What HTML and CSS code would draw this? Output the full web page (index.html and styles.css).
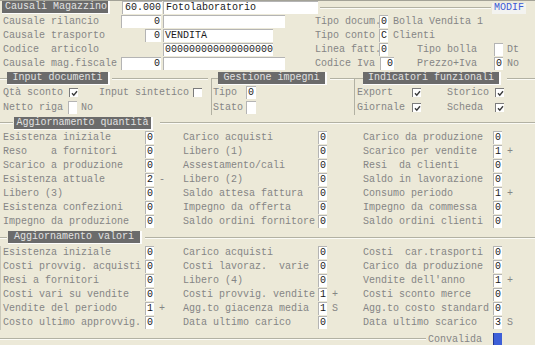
FILE: index.html
```html
<!DOCTYPE html>
<html lang="it">
  <head>
    <meta charset="UTF-8" />
    <meta name="viewport" content="width=device-width, initial-scale=1.0" />
    <title>Causali Magazzino</title>
    <link rel="stylesheet" href="styles.css">
  </head>
  <body>
    <div class="top">
      <div class="r1">
        <span class="tit t-caus">Causali Magazzino</span>
        <span class="fld f-cod">60.000</span>
        <span class="fld f-des1">Fotolaboratorio</span>
        <span class="seg"></span>
        <span class="modif">MODIF</span>
      </div>
      <div class="row">
        <span class="lbl">Causale rilancio</span>
        <span class="fld f-num">0</span>
        <span class="fld f-des2"></span>
        <span class="lbl">Tipo docum.</span>
        <span class="fld f-one">0</span>
        <span class="lbl c-txt">Bolla Vendita 1</span>
      </div>
      <div class="row">
        <span class="lbl">Causale trasporto</span>
        <span class="fld f-num f-sm">0</span>
        <span class="fld f-des3">VENDITA</span>
        <span class="lbl">Tipo conto</span>
        <span class="fld f-one">C</span>
        <span class="lbl c-txt">Clienti</span>
      </div>
      <div class="row">
        <span class="lbl">Codice  articolo</span>
        <span></span>
        <span class="fld f-des3">000000000000000000</span>
        <span class="lbl">Linea fatt.</span>
        <span class="fld f-one">0</span>
        <span></span>
        <span class="lbl">Tipo bolla</span>
        <span class="fld f-one"></span>
        <span class="lbl c-end">Dt</span>
      </div>
      <div class="row">
        <span class="lbl">Causale mag.fiscale</span>
        <span class="fld f-num">0</span>
        <span class="fld f-des2"></span>
        <span class="lbl">Codice Iva</span>
        <span class="fld f-iva">0</span>
        <span></span>
        <span class="lbl">Prezzo+Iva</span>
        <span class="fld f-one">0</span>
        <span class="lbl c-end">No</span>
      </div>
    </div>

    <div class="grps">
      <div class="grp">
        <div class="gt">
          <span class="seg s-7"></span>
          <span class="tit t-inp">Input documenti</span>
          <span class="seg s-r"></span>
        </div>
        <div class="gb gb1">
          <span class="lbl">Qtà sconto</span>
          <span class="chk"><svg width="7" height="7" viewBox="0 0 7 7"><path d="M1 3.2 L2.8 5.2 L6 1.2" fill="none" stroke="#3c3c3c" stroke-width="1.4"/></svg></span>
          <span class="lbl">Input sintetico</span>
          <span class="chk"></span>
          <span class="lbl">Netto riga</span>
          <span class="pair"><span class="fld f-one"></span><span class="lbl">No</span></span>
        </div>
      </div>
      <div class="grp">
        <div class="gt">
          <span class="seg corner"></span>
          <span class="tit t-ges">Gestione impegni</span>
          <span class="seg s-r3"></span>
        </div>
        <div class="gb gb2">
          <span class="lbl">Tipo</span>
          <span class="fld f-one f-10">0</span>
          <span class="lbl">Stato</span>
          <span class="fld f-one f-10"></span>
        </div>
      </div>
      <div class="grp">
        <div class="gt">
          <span class="seg corner c-8"></span>
          <span class="tit t-ind">Indicatori funzionali</span>
          <span class="seg s-r6"></span>
        </div>
        <div class="gb gb3">
          <span class="lbl">Export</span>
          <span class="chk"><svg width="7" height="7" viewBox="0 0 7 7"><path d="M1 3.2 L2.8 5.2 L6 1.2" fill="none" stroke="#3c3c3c" stroke-width="1.4"/></svg></span>
          <span class="lbl">Storico</span>
          <span class="chk"><svg width="7" height="7" viewBox="0 0 7 7"><path d="M1 3.2 L2.8 5.2 L6 1.2" fill="none" stroke="#3c3c3c" stroke-width="1.4"/></svg></span>
          <span class="lbl">Giornale</span>
          <span class="chk"><svg width="7" height="7" viewBox="0 0 7 7"><path d="M1 3.2 L2.8 5.2 L6 1.2" fill="none" stroke="#3c3c3c" stroke-width="1.4"/></svg></span>
          <span class="lbl">Scheda</span>
          <span class="chk"><svg width="7" height="7" viewBox="0 0 7 7"><path d="M1 3.2 L2.8 5.2 L6 1.2" fill="none" stroke="#3c3c3c" stroke-width="1.4"/></svg></span>
        </div>
      </div>
    </div>

    <div class="sec">
      <div class="gt gt-q">
        <span class="seg s-13"></span>
        <span class="tit t-qta">Aggiornamento quantità</span>
        <span class="seg s-l7"></span>
      </div>
      <div class="vals">
        <span class="lbl">Esistenza iniziale</span><span class="fld v">0</span><span class="sfx"></span>
        <span class="lbl">Carico acquisti</span><span class="fld v">0</span><span class="sfx"></span>
        <span class="lbl">Carico da produzione</span><span class="fld v">0</span><span class="sfx"></span>

        <span class="lbl">Reso    a fornitori</span><span class="fld v">0</span><span class="sfx"></span>
        <span class="lbl">Libero (1)</span><span class="fld v">0</span><span class="sfx"></span>
        <span class="lbl">Scarico per vendite</span><span class="fld v">1</span><span class="sfx">+</span>

        <span class="lbl">Scarico a produzione</span><span class="fld v">0</span><span class="sfx"></span>
        <span class="lbl">Assestamento/cali</span><span class="fld v">0</span><span class="sfx"></span>
        <span class="lbl">Resi  da clienti</span><span class="fld v">0</span><span class="sfx"></span>

        <span class="lbl">Esistenza attuale</span><span class="fld v">2</span><span class="sfx">-</span>
        <span class="lbl">Libero (2)</span><span class="fld v">0</span><span class="sfx"></span>
        <span class="lbl">Saldo in lavorazione</span><span class="fld v">0</span><span class="sfx"></span>

        <span class="lbl">Libero (3)</span><span class="fld v">0</span><span class="sfx"></span>
        <span class="lbl">Saldo attesa fattura</span><span class="fld v">0</span><span class="sfx"></span>
        <span class="lbl">Consumo periodo</span><span class="fld v">1</span><span class="sfx">+</span>

        <span class="lbl">Esistenza confezioni</span><span class="fld v">0</span><span class="sfx"></span>
        <span class="lbl">Impegno da offerta</span><span class="fld v">0</span><span class="sfx"></span>
        <span class="lbl">Impegno da commessa</span><span class="fld v">0</span><span class="sfx"></span>

        <span class="lbl">Impegno da produzione</span><span class="fld v">0</span><span class="sfx"></span>
        <span class="lbl">Saldo ordini fornitore</span><span class="fld v">0</span><span class="sfx"></span>
        <span class="lbl">Saldo ordini clienti</span><span class="fld v">0</span><span class="sfx"></span>
      </div>
    </div>

    <div class="sec">
      <div class="gt gt-v">
        <span class="seg s-7"></span>
        <span class="tit t-val">Aggiornamento valori</span>
        <span class="seg s-l3"></span>
      </div>
      <div class="vals vals-v">
        <span class="lbl">Esistenza iniziale</span><span class="fld v">0</span><span class="sfx"></span>
        <span class="lbl">Carico acquisti</span><span class="fld v">0</span><span class="sfx"></span>
        <span class="lbl">Costi  car.trasporti</span><span class="fld v">0</span><span class="sfx"></span>

        <span class="lbl">Costi provvig. acquisti</span><span class="fld v">0</span><span class="sfx"></span>
        <span class="lbl">Costi lavoraz.  varie</span><span class="fld v">0</span><span class="sfx"></span>
        <span class="lbl">Carico da produzione</span><span class="fld v">0</span><span class="sfx"></span>

        <span class="lbl">Resi a fornitori</span><span class="fld v">0</span><span class="sfx"></span>
        <span class="lbl">Libero (4)</span><span class="fld v">0</span><span class="sfx"></span>
        <span class="lbl">Vendite dell'anno</span><span class="fld v">1</span><span class="sfx">+</span>

        <span class="lbl">Costi vari su vendite</span><span class="fld v">0</span><span class="sfx"></span>
        <span class="lbl">Costi provvig. vendite</span><span class="fld v">1</span><span class="sfx">+</span>
        <span class="lbl">Costi sconto merce</span><span class="fld v">0</span><span class="sfx"></span>

        <span class="lbl">Vendite del periodo</span><span class="fld v">1</span><span class="sfx">+</span>
        <span class="lbl">Agg.to giacenza media</span><span class="fld v">1</span><span class="sfx">S</span>
        <span class="lbl">Agg.to costo standard</span><span class="fld v">0</span><span class="sfx"></span>

        <span class="lbl">Costo ultimo approvvig.</span><span class="fld v">0</span><span class="sfx"></span>
        <span class="lbl">Data ultimo carico</span><span class="fld v">0</span><span class="sfx"></span>
        <span class="lbl">Data ultimo scarico</span><span class="fld v">3</span><span class="sfx">S</span>
      </div>
      <div class="foot">
        <span class="seg"></span>
        <span class="lbl cnv">Convalida</span>
        <span class="btn"></span>
      </div>
    </div>
  </body>
</html>
```

FILE: styles.css
```css
* {
  box-sizing: border-box;
}

body {
  margin: 0;
  width: 535px;
  height: 345px;
  overflow: hidden;
  background-color: #ece9d8;
  border-top: 1px solid #a3a297;
  font-family: "Liberation Mono", "Courier New", monospace;
  font-size: 10px;
  color: #858585;
}

/* testi e campi */
.lbl {
  display: block;
  height: 13px;
  line-height: 13px;
  white-space: pre;
}

.fld {
  display: block;
  height: 13px;
  line-height: 12px;
  padding: 0 1px 0 1px;
  background-color: #fff;
  color: #1a1a1a;
  border-top: 1px solid #b4b4b4;
  border-left: 1px solid #b4b4b4;
  white-space: pre;
  overflow: hidden;
}

.tit {
  display: block;
  height: 13px;
  line-height: 12px;
  background-color: #6b6b6b;
  color: #e2e2e2;
  text-align: center;
  white-space: pre;
  border-right: 2px solid #fdfdfd;
  border-bottom: 1px solid #fdfdfd;
}

.seg {
  display: block;
  flex: 1;
  height: 0;
  border-top: 1px solid #b2b1a3;
  border-bottom: 1px solid #fbfbf6;
}

/* testata */
.top .row {
  display: grid;
  grid-template-columns: 121px 42px 152px 64px 14px 24px 77px 12px 1fr;
  height: 14px;
}

.top .row > .lbl:first-child {
  padding-left: 3px;
}

.r1 {
  display: flex;
  align-items: flex-start;
  height: 14px;
}

.t-caus {
  width: 108px;
  margin-left: 2px;
  padding-left: 2px;
}

.f-cod {
  width: 40px;
  margin-left: 12px;
  text-align: right;
}

.f-des1 {
  width: 155px;
  margin-left: 1px;
  padding-left: 2px;
}

.r1 .seg {
  align-self: center;
  margin: 0 1px 0 2px;
}

.modif {
  display: block;
  width: 34px;
  height: 11px;
  margin: 2px 9px 0 0;
  line-height: 10px;
  background-color: #f3f3f0;
  color: #3d5ad2;
  padding-left: 2px;
}

.f-num {
  width: 40px;
  text-align: right;
}

.f-sm {
  width: 16px;
  margin-left: 24px;
}

.f-des2 {
  width: 122px;
}

.f-des3 {
  width: 110px;
}

.f-one {
  width: 9px;
}

.f-iva {
  width: 14px;
  margin-left: 1px;
  text-align: right;
}

.c-txt {
  grid-column: 6 / -1;
}

.c-end {
  padding-left: 1px;
}

/* riquadri */
.grps {
  display: grid;
  grid-template-columns: 211px 143px 1fr;
}

.gt {
  display: flex;
  align-items: center;
  height: 15px;
}

.s-7 {
  flex: 0 0 7px;
}

.s-13 {
  flex: 0 0 13px;
}

.s-r {
  margin: 0 3px 0 2px;
}

.s-r3 {
  margin-left: 3px;
}

.s-r6 {
  margin-left: 6px;
}

.s-l7 {
  margin-left: 7px;
}

.s-l3 {
  margin-left: 3px;
}

.corner {
  flex: 0 0 7px;
  align-self: flex-end;
  height: 8px;
  border-bottom: none;
  border-left: 1px solid #b2b1a3;
}

.c-8 {
  flex-basis: 9px;
}

.t-inp {
  width: 103px;
}

.t-ges {
  width: 109px;
}

.t-ind {
  width: 138px;
}

.t-qta {
  width: 139px;
  margin-left: 1px;
}

.t-val {
  width: 134px;
  margin-left: 1px;
}

.gb {
  display: grid;
  grid-auto-rows: 14px;
  row-gap: 1px;
  height: 29px;
}

.gb1 {
  grid-template-columns: 66px 30px 94px 1fr;
  padding-left: 3px;
}

.gb2 {
  grid-template-columns: 33px 1fr;
  padding-left: 1px;
  border-left: 1px solid #b2b1a3;
}

.gb3 {
  grid-template-columns: 55px 35px 48px 1fr;
  padding-left: 2px;
  border-left: 1px solid #b2b1a3;
}

.f-10 {
  width: 10px;
}

.chk {
  display: flex;
  align-items: center;
  justify-content: center;
  width: 9px;
  height: 9px;
  margin-top: 2px;
  background-color: #fff;
  border-top: 1px solid #7c7c7c;
  border-left: 1px solid #7c7c7c;
}

.pair {
  display: flex;
  gap: 4px;
  grid-column: 2 / 4;
  margin-left: -1px;
}

/* aggiornamenti */
.gt-q {
  height: 16px;
}

.gt-v {
  height: 17px;
}

.vals {
  display: grid;
  grid-template-columns: 142px 9px 29px 135px 9px 36px 130px 9px 1fr;
  grid-auto-rows: 14px;
  padding-left: 3px;
}

.vals-v {
  padding-left: 2px;
  border-left: 1px solid #c8c7ba;
}

.v {
  padding: 0 0 0 1px;
}

.sfx {
  display: block;
  padding-left: 5px;
  line-height: 13px;
}

.foot {
  display: flex;
  align-items: center;
  height: 15px;
  padding-top: 3px;
}

.cnv {
  padding: 0 2px;
}

.btn {
  display: block;
  align-self: flex-end;
  width: 9px;
  height: 12px;
  margin: 0 33px 0 9px;
  background-color: #3d5fd8;
  border-left: 1px solid #1f3590;
}
```
